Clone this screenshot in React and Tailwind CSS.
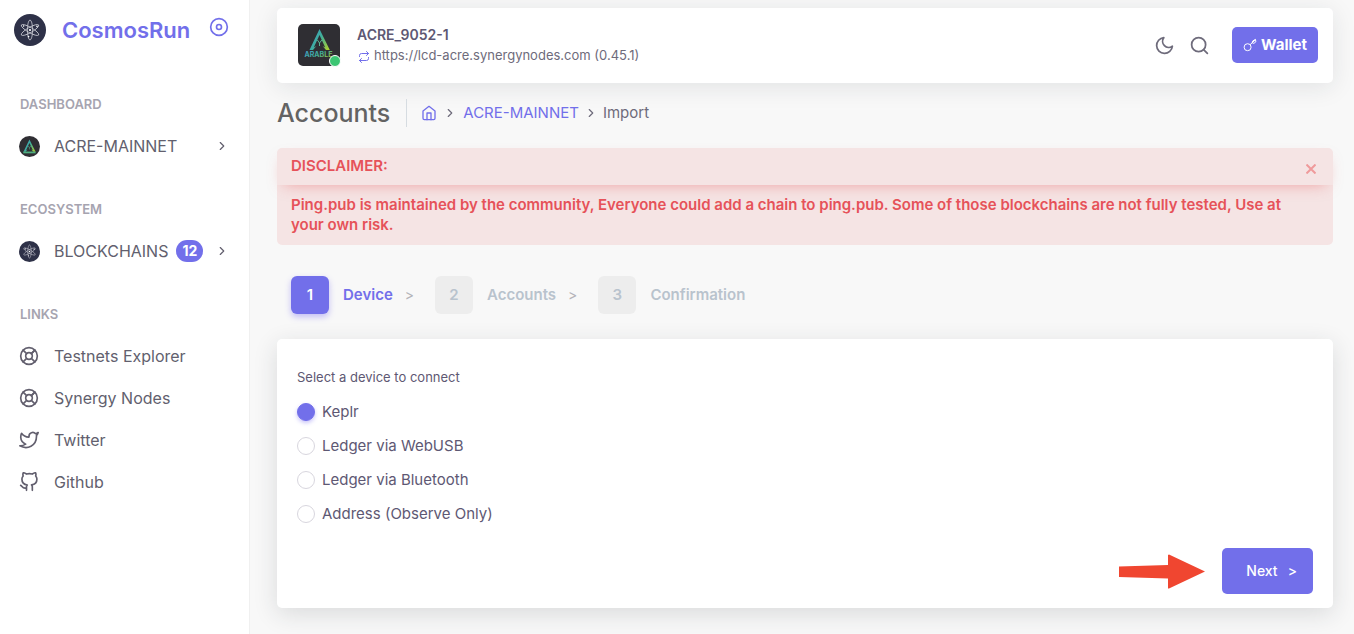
import { useState } from "react";
import {
  FiChevronRight,
  FiDisc,
  FiGithub,
  FiHome,
  FiLifeBuoy,
  FiMoon,
  FiRepeat,
  FiSearch,
  FiTwitter,
} from "react-icons/fi";

function CosmosLogo({ className }) {
  return (
    <svg viewBox="0 0 32 32" className={className} aria-hidden="true">
      <circle cx="16" cy="16" r="16" fill="#2e3148" />
      <g fill="none" stroke="#c9cad3" strokeWidth="0.8">
        <ellipse cx="16" cy="16" rx="2.6" ry="10" />
        <ellipse cx="16" cy="16" rx="2.6" ry="10" transform="rotate(60 16 16)" />
        <ellipse cx="16" cy="16" rx="2.6" ry="10" transform="rotate(-60 16 16)" />
      </g>
      <g fill="#ffffff">
        <circle cx="16" cy="16" r="1.1" />
        <circle cx="9.6" cy="12" r="0.8" />
        <circle cx="23" cy="12.4" r="0.8" />
        <circle cx="14.6" cy="22.6" r="0.8" />
      </g>
    </svg>
  );
}

function ArableMark() {
  return (
    <>
      <defs>
        <linearGradient id="arable" x1="0" y1="0.2" x2="1" y2="0.8">
          <stop offset="0" stopColor="#3f9fc4" />
          <stop offset="0.5" stopColor="#3fae9a" />
          <stop offset="1" stopColor="#a5cb35" />
        </linearGradient>
      </defs>
      <path
        fill="url(#arable)"
        d="M21.5 5 L11.5 26 L15 26 L18.4 22 L15.8 23.5 L21.5 11 L27.2 23.5 L24.6 22 L28 26 L31.8 26 Z"
      />
      <path d="M19.4 16 L21.5 19 L23.8 16 M21.5 19 V22" fill="none" stroke="#58b394" strokeWidth="1" />
    </>
  );
}

function ArableLogo({ className }) {
  return (
    <svg viewBox="0 0 42 42" className={className} aria-hidden="true">
      <rect width="42" height="42" fill="#2f2e33" />
      <ArableMark />
      <text
        x="20.5"
        y="33"
        textAnchor="middle"
        fontSize="7"
        fontWeight="700"
        fontFamily="Inter, sans-serif"
        fill="url(#arable)"
      >
        ARABLE
      </text>
    </svg>
  );
}

function ArableRound({ className }) {
  return (
    <svg viewBox="0 0 42 42" className={className} aria-hidden="true">
      <circle cx="21" cy="21" r="21" fill="#2f2e33" />
      <g transform="translate(-4.5 1) scale(1.18)">
        <ArableMark />
        <path d="M11 27 H32" stroke="#4fae80" strokeWidth="3" />
      </g>
    </svg>
  );
}

function NavItem({ icon, label, badge, arrow }) {
  return (
    <li>
      <a href="#" className="flex h-[42px] items-center pr-5 pl-[19px] text-[#625f6e]">
        <span className="mr-[14px] flex w-[21px] shrink-0">{icon}</span>
        <span className="whitespace-nowrap text-base">{label}</span>
        {badge && (
          <span className="ml-2 rounded-full bg-[#726fea] px-[6px] text-sm leading-[22px] font-bold text-white">
            {badge}
          </span>
        )}
        {arrow && <FiChevronRight className="ml-auto size-[14px]" />}
      </a>
    </li>
  );
}

function NavGroup({ title, children }) {
  return (
    <section>
      <h2 className="mb-[11px] pl-5 text-[13px] leading-5 font-semibold text-[#a6a4b0]">{title}</h2>
      <ul>{children}</ul>
    </section>
  );
}

function Sidebar() {
  return (
    <aside className="flex w-[250px] shrink-0 flex-col border-r border-[#f0f0f0] bg-white">
      <div className="flex items-start pt-[14px] pr-5 pl-[14px]">
        <a href="#" className="flex items-center">
          <CosmosLogo className="size-8" />
          <span className="ml-4 text-[22px] leading-8 font-semibold text-[#726fea]">CosmosRun</span>
        </a>
        <button type="button" aria-label="Pin menu" className="mt-[3px] ml-auto text-[#726fea]">
          <FiDisc className="size-5" />
        </button>
      </div>
      <nav className="mt-12 flex flex-col gap-8">
        <NavGroup title="DASHBOARD">
          <NavItem icon={<ArableRound className="size-[21px]" />} label="ACRE-MAINNET" arrow />
        </NavGroup>
        <NavGroup title="ECOSYSTEM">
          <NavItem icon={<CosmosLogo className="size-[21px]" />} label="BLOCKCHAINS" badge="12" arrow />
        </NavGroup>
        <NavGroup title="LINKS">
          <NavItem icon={<FiLifeBuoy className="size-5" />} label="Testnets Explorer" />
          <NavItem icon={<FiLifeBuoy className="size-5" />} label="Synergy Nodes" />
          <NavItem icon={<FiTwitter className="size-5" />} label="Twitter" />
          <NavItem icon={<FiGithub className="size-5" />} label="Github" />
        </NavGroup>
      </nav>
    </aside>
  );
}

function TopBar() {
  return (
    <header className="flex items-center rounded-[5px] bg-white pt-4 pr-[15px] pb-[17px] pl-[21px] shadow-[0_4px_24px_0_rgba(34,41,47,0.1)]">
      <div className="relative">
        <ArableLogo className="size-[42px] rounded-[5px]" />
        <span className="absolute -right-px -bottom-px size-3 rounded-full border border-white bg-[#3cc673]" />
      </div>
      <div className="ml-[17px]">
        <p className="text-sm leading-5 font-semibold text-[#5e5873]">ACRE_9052-1</p>
        <p className="flex items-center text-[13px] leading-5 text-[#6e6b7b]">
          <FiRepeat className="mt-1 mr-1 ml-px size-3 text-[#726fea]" />
          https://lcd-acre.synergynodes.com (0.45.1)
        </p>
      </div>
      <div className="ml-auto flex items-center text-[#6e6b7b]">
        <button type="button" aria-label="Toggle dark mode">
          <FiMoon className="size-[21px]" />
        </button>
        <button type="button" aria-label="Search" className="ml-[14px]">
          <FiSearch className="size-[21px]" />
        </button>
        <button
          type="button"
          className="ml-[22px] flex h-9 items-center gap-1 rounded-[5px] bg-[#726fea] px-[11px] text-[15px] font-bold text-white"
        >
          <KeyIcon className="size-[14px]" />
          Wallet
        </button>
      </div>
    </header>
  );
}

function KeyIcon({ className }) {
  return (
    <svg viewBox="0 0 14 14" className={className} fill="none" stroke="currentColor" strokeWidth="1" aria-hidden="true">
      <circle cx="4.6" cy="9.2" r="3.5" />
      <path d="M7.1 6.7 L12.6 1.6 M9.2 4.8 L9.8 2.9 L12.4 1.4 L12.9 3.7 L10.9 5.4 Z" strokeLinejoin="round" />
    </svg>
  );
}

function Breadcrumb() {
  return (
    <div className="mt-4 flex h-7 items-center">
      <h1 className="border-r border-[#d6dce1] pr-4 text-[25px] leading-7 font-medium text-[#636363]">
        Accounts
      </h1>
      <nav aria-label="Breadcrumb" className="ml-[14px] flex items-center text-[15px] text-[#6e6b7b]">
        <a href="#" aria-label="Home" className="text-[#726fea]">
          <FiHome className="size-4" />
        </a>
        <FiChevronRight className="mx-[6px] size-[14px]" />
        <a href="#" className="text-[#726fea]">ACRE-MAINNET</a>
        <FiChevronRight className="mx-[5px] size-[14px]" />
        <span>Import</span>
      </nav>
    </div>
  );
}

function Disclaimer({ onClose }) {
  return (
    <div role="alert" className="mt-[21px] rounded-[5px] bg-[#f5e4e4] text-[15px] text-[#e65259]">
      <div className="flex h-[37px] items-center justify-between rounded-t-[5px] px-[14px] shadow-[0_6px_15px_-7px_rgba(234,84,85,0.5)]">
        <h2 className="font-semibold">DISCLAIMER:</h2>
        <button type="button" aria-label="Close" onClick={onClose} className="mt-1 p-[3px] text-[#ef9a9b]">
          <svg viewBox="0 0 10 10" className="size-[10px]" stroke="currentColor" strokeWidth="2" aria-hidden="true">
            <path d="M0.5 0.5 L9.5 9.5 M9.5 0.5 L0.5 9.5" />
          </svg>
        </button>
      </div>
      <p className="py-[10px] pr-9 pl-[14px] leading-5 font-semibold">
        Ping.pub is maintained by the community, Everyone could add a chain to ping.pub. Some of those blockchains are
        not fully tested, Use at your own risk.
      </p>
    </div>
  );
}

function Steps() {
  const steps = ["Device", "Accounts", "Confirmation"];
  return (
    <ol className="mt-[31px] flex items-center px-[14px] text-[15px] font-semibold">
      {steps.map((label, i) => (
        <li key={label} className={i === 0 ? "flex items-center text-[#726fea]" : "flex items-center text-[#b9c3cd]"}>
          <button type="button" className="flex items-center gap-[14px]">
            <span
              className={
                i === 0
                  ? "flex size-[38px] items-center justify-center rounded-md bg-[#726fea] text-white shadow-[0_3px_6px_0_rgba(115,103,240,0.4)]"
                  : "flex size-[38px] items-center justify-center rounded-md bg-[#ededed]"
              }
            >
              {i + 1}
            </span>
            <span>{label}</span>
          </button>
          {i < steps.length - 1 && (
            <span className="mr-[21px] ml-3 text-sm font-normal text-[#b4b4b8]">&gt;</span>
          )}
        </li>
      ))}
    </ol>
  );
}

function DeviceForm() {
  const [device, setDevice] = useState("Keplr");
  const devices = ["Keplr", "Ledger via WebUSB", "Ledger via Bluetooth", "Address (Observe Only)"];
  return (
    <form
      onSubmit={(e) => e.preventDefault()}
      className="mt-[25px] rounded-[5px] bg-white px-5 pt-7 pb-[14px] shadow-[0_6px_24px_0_rgba(34,41,47,0.14)]"
    >
      <fieldset>
        <legend className="text-[13px] leading-5 text-[#5e5873]">Select a device to connect</legend>
        <div className="mt-[14px] flex flex-col gap-[13px]">
          {devices.map((name) => (
            <label key={name} className="flex items-center gap-[7px] text-[15px] leading-[21px] text-[#5e5873]">
              <input
                type="radio"
                name="device"
                value={name}
                checked={device === name}
                onChange={() => setDevice(name)}
                className="size-[18px] appearance-none rounded-full border border-[#d8d6de] bg-white checked:border-[#726fea] checked:bg-[#726fea] checked:shadow-[0_2px_4px_0_rgba(115,103,240,0.4)]"
              />
              {name}
            </label>
          ))}
        </div>
      </fieldset>
      <div className="mt-6 flex items-center justify-end">
        <svg viewBox="0 0 88 36" className="mr-4 h-9 w-[88px]" aria-hidden="true">
          <path d="M1 13.5 L50 12 V2 L51 1.5 L87 18.5 L51 35.5 L50 35.5 V25.5 L1 24 Z" fill="#f04630" />
        </svg>
        <button
          type="submit"
          className="flex h-[46px] items-center gap-[10px] rounded-[5px] bg-[#726fea] pr-4 pl-6 text-sm font-medium text-white"
        >
          Next <span>&gt;</span>
        </button>
      </div>
    </form>
  );
}

export default function App() {
  const [showDisclaimer, setShowDisclaimer] = useState(true);
  return (
    <div className="flex min-h-screen bg-[#f8f8f8] font-[Inter,sans-serif]">
      <Sidebar />
      <main className="min-w-0 flex-1 pt-2 pr-[21px] pb-[26px] pl-[27px]">
        <TopBar />
        <Breadcrumb />
        {showDisclaimer && <Disclaimer onClose={() => setShowDisclaimer(false)} />}
        <Steps />
        <DeviceForm />
      </main>
    </div>
  );
}
